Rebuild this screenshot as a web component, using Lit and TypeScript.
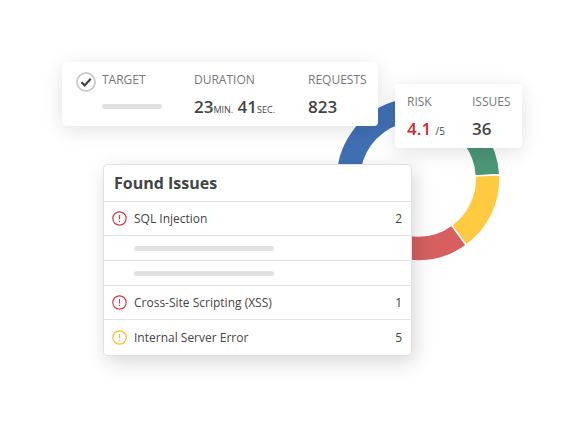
import { LitElement, html, css, svg, nothing } from "lit";
import { customElement, property } from "lit/decorators.js";
import { classMap } from "lit/directives/class-map.js";

interface Issue {
  name?: string;
  count?: number;
  level?: "high" | "medium";
}

const ISSUES: Issue[] = [
  { name: "SQL Injection", count: 2, level: "high" },
  {},
  {},
  { name: "Cross-Site Scripting (XSS)", count: 1, level: "high" },
  { name: "Internal Server Error", count: 5, level: "medium" },
];

// Ring segments in degrees, clockwise from three o'clock.
const SEGMENTS = [
  { from: -70, to: -3, tone: "green" },
  { from: -3, to: 54, tone: "yellow" },
  { from: 54, to: 140, tone: "red" },
  { from: 140, to: 290, tone: "blue" },
];

@customElement("risk-ring")
class RiskRing extends LitElement {
  static styles = css`
    :host { display: block; }
    svg { display: block; width: 100%; height: auto; }
    path { stroke: #fff; stroke-width: 1.6; }
    .green { fill: #4c9678; }
    .yellow { fill: #ffc940; }
    .red { fill: #d66060; }
    .blue { fill: #4070b4; }
  `;

  private arc(from: number, to: number) {
    const at = (deg: number, r: number) => {
      const a = (deg * Math.PI) / 180;
      return `${(82 + r * Math.cos(a)).toFixed(2)} ${(82 + r * Math.sin(a)).toFixed(2)}`;
    };
    const large = to - from > 180 ? 1 : 0;
    return `M${at(from, 82)}A82 82 0 ${large} 1 ${at(to, 82)}L${at(to, 57)}A57 57 0 ${large} 0 ${at(from, 57)}Z`;
  }

  render() {
    return html`<svg viewBox="0 0 164 164" role="img" aria-label="Issues by severity">
      ${SEGMENTS.map((s) => svg`<path class=${s.tone} d=${this.arc(s.from, s.to)}></path>`)}
    </svg>`;
  }
}

@customElement("alert-icon")
class AlertIcon extends LitElement {
  @property() level = "high";

  static styles = css`
    :host { display: block; }
    svg { display: block; width: 15px; height: 15px; fill: none; stroke: currentColor; }
    .high { color: #d13f43; }
    .medium { color: #fbbc2c; }
  `;

  render() {
    return html`<svg viewBox="0 0 15 15" class=${this.level} aria-hidden="true">
      <circle cx="7.5" cy="7.5" r="6.7" stroke-width="1.2"></circle>
      <path d="M7.5 4v4.4M7.5 9.8v1.3" stroke-width="1.2"></path>
    </svg>`;
  }
}

@customElement("app-root")
class AppRoot extends LitElement {
  static styles = css`
    :host {
      display: block;
      font-family: "Open Sans", "Noto Sans", sans-serif;
      color: #444;
      background: #fff;
    }
    .stage { padding: 62px 52px 66px 62px; }
    .scene { position: relative; }
    .ring { position: absolute; top: 35px; right: 22px; width: 164px; }
    .summary {
      position: relative;
      display: grid;
      grid-template-columns: 316fr 127fr;
      align-items: start;
      gap: 17px;
    }
    .card {
      box-sizing: border-box;
      margin: 0;
      background: #fff;
      border-radius: 4px;
      box-shadow: 0 4px 20px rgba(0, 0, 0, 0.12);
    }
    .scan {
      display: grid;
      grid-template-columns: 26px 92fr 114fr 70fr;
      padding: 9px 0 7px 14px;
    }
    .score {
      display: grid;
      grid-template-columns: 65fr 50fr;
      margin-top: 22px;
      padding: 9px 0 7px 12px;
    }
    .check { display: block; width: 22px; height: 22px; }
    dt { font-size: 12px; line-height: 18px; font-weight: 400; color: #777; white-space: nowrap; }
    dd { margin: 6px 0 0; font-size: 17px; line-height: 24px; font-weight: 600; white-space: nowrap; }
    dd small { font-size: 9px; line-height: 1; font-weight: 400; }
    .risk { color: #d1272c; }
    .risk small { font-size: 10px; color: #444; }
    .bar { display: block; height: 5px; border-radius: 3px; background: #e1e1e1; }
    .target-bar { width: 60px; margin-top: 15px; }
    .issues {
      position: relative;
      margin: 16px 110px 0 41px;
      border: 1px solid #e1e1e1;
      box-shadow: 3px 6px 20px rgba(0, 0, 0, 0.16);
    }
    h2 { margin: 0; padding: 0 10px; font-size: 16px; line-height: 36px; font-weight: 700; }
    table { width: 100%; border-collapse: collapse; font-size: 12px; line-height: 16px; }
    td { height: 33px; padding: 0; border-top: 1px solid #e1e1e1; }
    .empty td { height: 24px; }
    tr:last-child td { height: 35px; }
    .icon { width: 22px; padding-left: 8px; }
    .count { padding-right: 9px; text-align: right; }
    .name-bar { width: 140px; }
  `;

  private row(issue: Issue) {
    return html`<tr class=${classMap({ empty: !issue.name })}>
      <td class="icon">${issue.level ? html`<alert-icon level=${issue.level}></alert-icon>` : nothing}</td>
      <td>${issue.name ?? html`<span class="bar name-bar"></span>`}</td>
      <td class="count">${issue.count ?? nothing}</td>
    </tr>`;
  }

  render() {
    return html`<main class="stage">
      <div class="scene">
        <risk-ring class="ring"></risk-ring>
        <div class="summary">
          <dl class="card scan">
            <svg class="check" viewBox="0 0 22 22" fill="none" aria-hidden="true">
              <circle cx="10" cy="11" r="9" stroke="#ccc" stroke-width="2"></circle>
              <path d="M5.5 11.2l3.2 3.2 6-6.6" stroke="#444" stroke-width="2.2"></path>
            </svg>
            <div><dt>TARGET</dt><dd><span class="bar target-bar"></span></dd></div>
            <div><dt>DURATION</dt><dd>23<small>MIN.</small> 41<small>SEC.</small></dd></div>
            <div><dt>REQUESTS</dt><dd>823</dd></div>
          </dl>
          <dl class="card score">
            <div><dt>RISK</dt><dd class="risk">4.1 <small>/5</small></dd></div>
            <div><dt>ISSUES</dt><dd>36</dd></div>
          </dl>
        </div>
        <section class="card issues">
          <h2>Found Issues</h2>
          <table aria-label="Found Issues"><tbody>${ISSUES.map((i) => this.row(i))}</tbody></table>
        </section>
      </div>
    </main>`;
  }
}
